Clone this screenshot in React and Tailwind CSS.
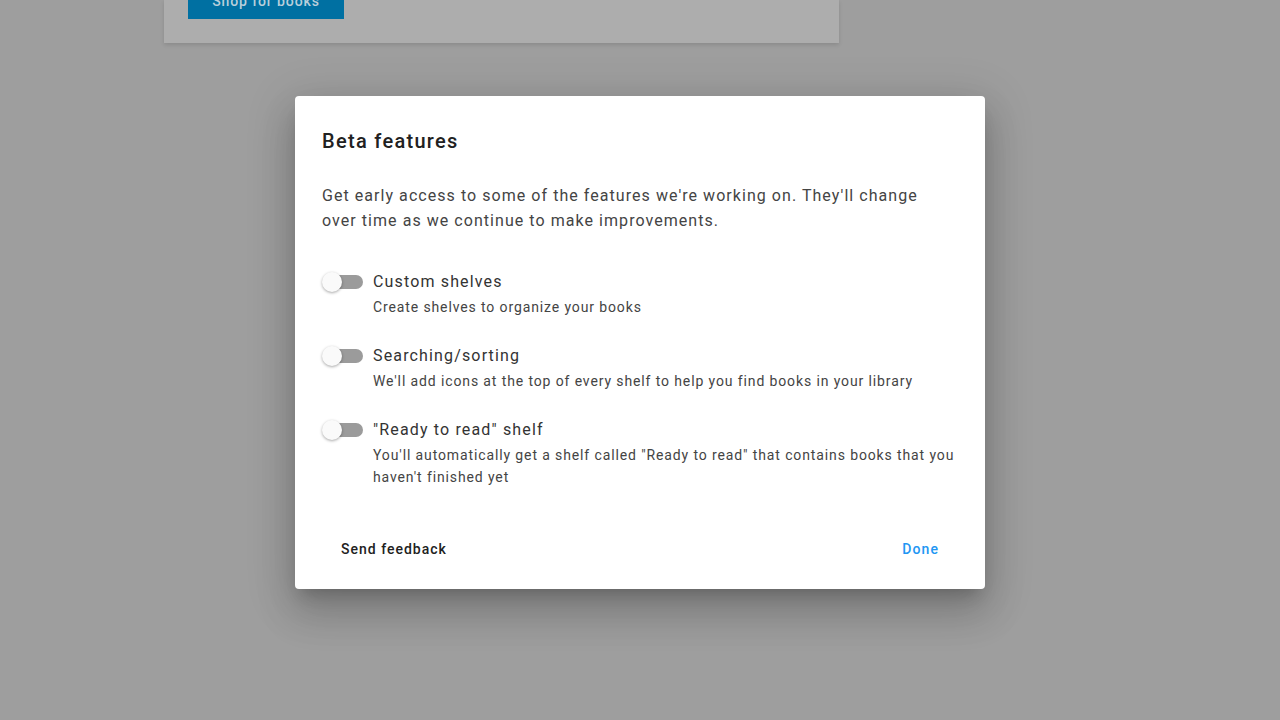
import React from "react";

function Toggle() {
  return (
    <div className="relative w-[41px] h-[20px] shrink-0">
      <div className="absolute left-[4px] right-0 top-[3px] h-[14px] rounded-full bg-[#9b9b9b]" />
      <div className="absolute left-0 top-0 w-[20px] h-[20px] rounded-full bg-[#fafafa] shadow-[0_1px_3px_rgba(0,0,0,0.35)]" />
    </div>
  );
}

function Item({ title, desc, className = "" }) {
  return (
    <div className={"flex items-start gap-[10px] " + className}>
      <div className="pt-[2px]">
        <Toggle />
      </div>
      <div className="flex flex-col">
        <div className="text-[16px] leading-[24px] tracking-[1.15px] text-[#333333]">{title}</div>
        <div className="mt-[2px] text-[14px] leading-[22px] tracking-[0.88px] text-[#444444]">{desc}</div>
      </div>
    </div>
  );
}

export default function App() {
  return (
    <div
      className="relative w-[1280px] h-[720px] overflow-hidden bg-[#9e9e9e]"
      style={{ fontFamily: "Roboto, 'Noto Sans', Arial, sans-serif" }}
    >
      <div className="ml-[164px] w-[675px] h-[43px] bg-[#adadad] shadow-[0_2px_4px_rgba(0,0,0,0.12)] pl-[24px] flex flex-col items-start">
        <div className="-mt-[17px] w-[156px] h-[36px] bg-[#0070a2] flex items-center justify-center">
          <span className="text-[14px] font-medium tracking-[0.9px] text-[#b9cfdb]">Shop for books</span>
        </div>
      </div>

      <div className="absolute inset-0 flex justify-center pt-[96px]">
        <div className="w-[690px] h-[493px] bg-white rounded-[4px] shadow-[0_11px_15px_-7px_rgba(0,0,0,0.2),0_24px_38px_3px_rgba(0,0,0,0.14),0_9px_46px_8px_rgba(0,0,0,0.12)] flex flex-col">
          <div className="px-[27px] pt-[33px]">
            <div className="text-[20px] leading-[24px] font-medium tracking-[1.3px] text-[#212121]">Beta features</div>
            <div className="mt-[30px] text-[16px] leading-[25px] tracking-[1.05px] text-[#444444]">
              Get early access to some of the features we're working on. They'll change
              <br />
              over time as we continue to make improvements.
            </div>
            <div className="mt-[37px] flex flex-col">
              <Item title="Custom shelves" desc="Create shelves to organize your books" />
              <Item
                className="mt-[26px]"
                title="Searching/sorting"
                desc="We'll add icons at the top of every shelf to help you find books in your library"
              />
              <Item
                className="mt-[26px]"
                title={'"Ready to read" shelf'}
                desc={'You\'ll automatically get a shelf called "Ready to read" that contains books that you haven\'t finished yet'}
              />
            </div>
          </div>
          <div className="mt-auto mb-[22px] flex items-center justify-between px-[30px]">
            <button className="h-[36px] px-[16px] text-[14px] font-medium tracking-[1px] text-[#212121]">Send feedback</button>
            <button className="h-[36px] px-[16px] text-[14px] font-medium tracking-[1.1px] text-[#2196f3]">Done</button>
          </div>
        </div>
      </div>
    </div>
  );
}
